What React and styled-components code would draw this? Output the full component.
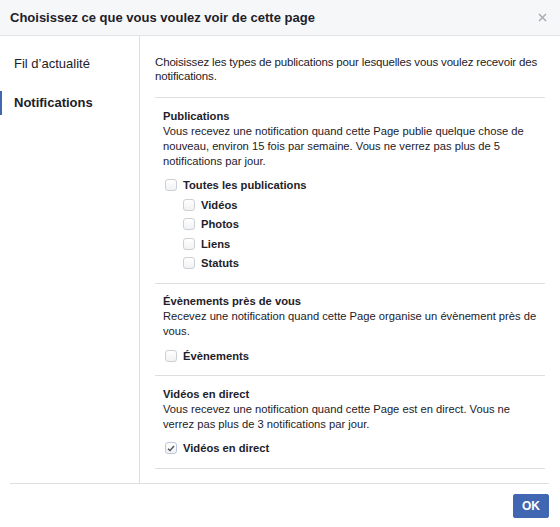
import React from 'react'
import styled, { createGlobalStyle } from 'styled-components'

const GlobalStyle = createGlobalStyle`
    body {
        margin: 0;
        background: #ffffff;
        font-family: "Liberation Sans", Arial, Helvetica, sans-serif;
        color: #1d2129;
    }
`

const Dialog = styled.div`
    width: 560px;
    height: 527px;
    display: flex;
    flex-direction: column;
    background: #ffffff;
    overflow: hidden;
`

const Header = styled.div`
    height: 35px;
    border-bottom: 1px solid #e5e5e5;
    background: #f6f7f9;
    display: flex;
    align-items: center;
    justify-content: space-between;
    padding: 0 12px 0 10px;
`

const Title = styled.h1`
    margin: 0;
    font-size: 13px;
    font-weight: bold;
    line-height: 18px;
    color: #1d2129;
`

const CloseButton = styled.button`
    border: none;
    background: none;
    padding: 0;
    width: 12px;
    height: 12px;
    display: flex;
    align-items: center;
    justify-content: center;
    cursor: pointer;
`

const Body = styled.div`
    display: flex;
    height: 447px;
`

const Nav = styled.div`
    width: 139px;
    border-right: 1px solid #dddfe2;
    padding-top: 16px;
    display: flex;
    flex-direction: column;
    gap: 15px;
`

const NavItem = styled.div`
    position: relative;
    height: 24px;
    line-height: 24px;
    padding-left: 14px;
    font-size: 13px;
    font-weight: ${(p) => (p.$active ? 'bold' : 'normal')};
    color: #1d2129;

    &::before {
        content: '';
        display: ${(p) => (p.$active ? 'block' : 'none')};
        position: absolute;
        left: 0;
        top: 0;
        width: 2px;
        height: 24px;
        background: #4267b2;
    }
`

const Content = styled.div`
    flex: 1;
    padding: 19px 15px 0;
`

const Intro = styled.p`
    margin: 0 0 14px;
    font-size: 11.5px;
    letter-spacing: -0.16px;
    line-height: 14px;
`

const Section = styled.div`
    border-top: 1px solid #dddfe2;
    padding: 10.5px 4px 9.5px 8px;

    &:last-child {
        border-bottom: 1px solid #dddfe2;
    }
`

const SectionTitle = styled.div`
    font-size: 11.2px;
    font-weight: bold;
    line-height: 15px;
`

const SectionText = styled.div`
    font-size: 11.2px;
    line-height: 15px;
`

const OptionList = styled.div`
    margin-top: 7px;
    display: flex;
    flex-direction: column;
`

const Option = styled.label`
    display: flex;
    align-items: center;
    gap: 6px;
    height: 19.5px;
    padding-left: ${(p) => (p.$nested ? 20 : 2)}px;
    font-size: 11.2px;
    font-weight: bold;
    color: #1d2129;
`

const Box = styled.span`
    width: 12px;
    height: 12px;
    box-sizing: border-box;
    border: 1px solid ${(p) => (p.$checked ? '#bdc6d8' : '#ccd0d5')};
    border-radius: 3px;
    background: linear-gradient(#ffffff, #f1f2f4);
    display: flex;
    align-items: center;
    justify-content: center;
`

const Footer = styled.div`
    margin: 0 11px 0 10px;
    border-top: 1px solid #dddfe2;
    padding-top: 10px;
    display: flex;
    justify-content: flex-end;
`

const OkButton = styled.button`
    height: 24px;
    padding: 0 8px;
    border: 1px solid #4267b2;
    border-radius: 2px;
    background: #4267b2;
    color: #ffffff;
    font-family: inherit;
    font-size: 12px;
    font-weight: bold;
    cursor: pointer;
`

const Checkbox = ({ checked }) => (
    <Box $checked={checked}>
        {checked && (
            <svg width="8" height="7" viewBox="0 0 8 7">
                <path d="M1 3.8 L3 5.6 L7 1" fill="none" stroke="#4b4f56" strokeWidth="1.4" />
            </svg>
        )}
    </Box>
)

const sections = [
    {
        title: 'Publications',
        text: 'Vous recevez une notification quand cette Page publie quelque chose de nouveau, environ 15 fois par semaine. Vous ne verrez pas plus de 5 notifications par jour.',
        options: [
            { label: 'Toutes les publications' },
            { label: 'Vidéos', nested: true },
            { label: 'Photos', nested: true },
            { label: 'Liens', nested: true },
            { label: 'Statuts', nested: true },
        ],
    },
    {
        title: 'Évènements près de vous',
        text: 'Recevez une notification quand cette Page organise un évènement près de vous.',
        options: [{ label: 'Évènements' }],
    },
    {
        title: 'Vidéos en direct',
        text: 'Vous recevez une notification quand cette Page est en direct. Vous ne verrez pas plus de 3 notifications par jour.',
        options: [{ label: 'Vidéos en direct', checked: true }],
    },
]

const App = () => (
    <Dialog>
        <GlobalStyle />
        <Header>
            <Title>Choisissez ce que vous voulez voir de cette page</Title>
            <CloseButton aria-label="Fermer">
                <svg width="9" height="9" viewBox="0 0 9 9">
                    <path d="M1 1 L8 8 M8 1 L1 8" stroke="#a8acb3" strokeWidth="1.5" />
                </svg>
            </CloseButton>
        </Header>
        <Body>
            <Nav>
                <NavItem>Fil d’actualité</NavItem>
                <NavItem $active>Notifications</NavItem>
            </Nav>
            <Content>
                <Intro>Choisissez les types de publications pour lesquelles vous voulez recevoir des notifications.</Intro>
                {sections.map((s) => (
                    <Section key={s.title}>
                        <SectionTitle>{s.title}</SectionTitle>
                        <SectionText>{s.text}</SectionText>
                        <OptionList>
                            {s.options.map((o) => (
                                <Option key={o.label} $nested={o.nested}>
                                    <Checkbox checked={o.checked} />
                                    {o.label}
                                </Option>
                            ))}
                        </OptionList>
                    </Section>
                ))}
            </Content>
        </Body>
        <Footer>
            <OkButton>OK</OkButton>
        </Footer>
    </Dialog>
)

export default App
